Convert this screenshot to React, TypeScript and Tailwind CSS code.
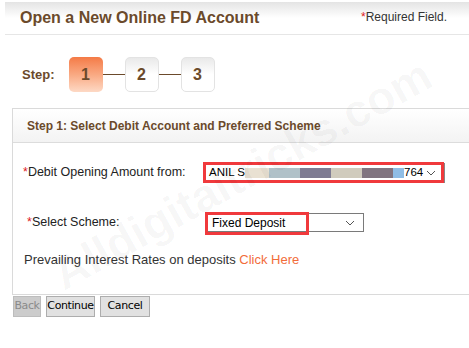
import React from "react";

const BROWN = "text-[#6b4a2b]";

function Chevron() {
  return (
    <svg width="10" height="6" viewBox="0 0 10 6" className="shrink-0">
      <path d="M1 1 L5 5 L9 1" fill="none" stroke="#555" strokeWidth="1" />
    </svg>
  );
}

function StepBox({ n, active }: { n: number; active?: boolean }) {
  return (
    <div
      className={
        active
          ? "flex h-[35px] w-[34px] items-center justify-center rounded-[5px] bg-gradient-to-b from-[#f47a45] via-[#f9a982] to-[#fdd9c5] text-[16px] font-bold text-[#6b4a2b]"
          : "flex h-[35px] w-[34px] items-center justify-center rounded-[5px] border border-[#e3e3e3] bg-gradient-to-b from-[#e9e9e9] via-white to-white text-[16px] font-bold text-[#6b4a2b]"
      }
    >
      {n}
    </div>
  );
}

export default function App() {
  const blocks = ["#e9e1d2", "#b0c1c8", "#7e7b93", "#d0cbbd", "#817480", "#8fbde6"];
  const widths = [24, 31, 31, 31, 31, 11];
  return (
    <div className="relative h-[348px] w-[469px] overflow-hidden bg-white font-['Liberation_Sans',Arial,sans-serif]">
      {/* header */}
      <div className="ml-[5px] mt-[2px] flex h-[33px] items-center justify-between border-b border-[#e6e6e6] bg-gradient-to-b from-[#e4e4e4] via-white to-white pl-[15px] pr-[22px]">
        <h1 className={`text-[16px] font-bold ${BROWN}`}>Open a New Online FD Account</h1>
        <span className="-mt-[3px] text-[12px] text-[#333]">
          <span className="text-[#e0201b]">*</span>Required Field.
        </span>
      </div>

      {/* steps */}
      <div className="mt-[22px] flex items-center pl-[22px]">
        <span className={`mr-[14px] text-[13px] font-bold ${BROWN}`}>Step:</span>
        <StepBox n={1} active />
        <div className="h-px w-[22px] bg-[#6b4a2b]" />
        <StepBox n={2} />
        <div className="h-px w-[22px] bg-[#6b4a2b]" />
        <StepBox n={3} />
      </div>

      {/* panel */}
      <div className="ml-[12px] mt-[16px] border-y border-l border-[#dadada]">
        <div className="flex h-[34px] items-center border-b border-[#dcdcdc] bg-gradient-to-b from-white to-[#f3f3f3] pl-[14px]">
          <span className={`text-[12px] font-bold ${BROWN}`}>Step 1: Select Debit Account and Preferred Scheme</span>
        </div>

        <div className="flex flex-col pb-[24px]">
          <div className="mt-[19px] flex items-center">
            <span className="w-[190px] whitespace-nowrap pl-[10px] text-[12.5px] text-[#222]">
              <span className="text-[#e0201b]">*</span>Debit Opening Amount from:
            </span>
            <div className="border-[3px] border-[#f0393c] p-px">
              <div className="flex h-[13px] w-[233px] items-center whitespace-nowrap bg-white pl-[2px] pr-[4px] text-[11.5px] text-black">
                <span className="shrink-0">ANIL S</span>
                <div className="flex h-[10px] shrink-0">
                  {blocks.map((c, i) => (
                    <div key={c} className="h-full" style={{ background: c, width: widths[i] }} />
                  ))}
                </div>
                <span className="shrink-0">764</span>
                <div className="ml-auto">
                  <Chevron />
                </div>
              </div>
            </div>
            <div className="h-[20px] w-px bg-[#888]" />
          </div>

          <div className="mt-[30px] flex items-center">
            <span className="w-[192px] whitespace-nowrap pl-[14px] text-[12.5px] text-[#222]">
              <span className="text-[#e0201b]">*</span>Select Scheme:
            </span>
            <div className="relative flex h-[19px] w-[159px] items-center border border-[#7a7a7a] bg-white pl-[6px] pr-[8px] text-[12px] text-black">
              <span>Fixed Deposit</span>
              <div className="ml-auto">
                <Chevron />
              </div>
              <div className="absolute -left-px -top-[2px] h-[23px] w-[104px] border-[3px] border-[#f0393c]" />
            </div>
          </div>

          <div className="mt-[18px] whitespace-nowrap pl-[11px] text-[13px] text-[#333]">
            Prevailing Interest Rates on deposits <span className="text-[#f26c3a]">Click Here</span>
          </div>
        </div>
      </div>

      {/* buttons */}
      <div className="ml-[13px] mt-px flex gap-[5px] font-['DejaVu_Sans',sans-serif] text-[11px] tracking-[-0.4px]">
        <button className="h-[21px] w-[28px] border border-[#bdbdbd] bg-[#cccccc] text-[#8a8a8a]">Back</button>
        <button className="h-[21px] w-[49px] border border-[#adadad] bg-[#e1e1e1] text-black">Continue</button>
        <button className="h-[21px] w-[50px] border border-[#adadad] bg-[#e1e1e1] text-black">Cancel</button>
      </div>

      {/* watermark */}
      <div className="pointer-events-none absolute left-[30px] top-[140px] -rotate-[29deg] select-none text-[46px] font-bold text-black/[0.035]">
        Alldigitaltricks.com
      </div>
    </div>
  );
}
